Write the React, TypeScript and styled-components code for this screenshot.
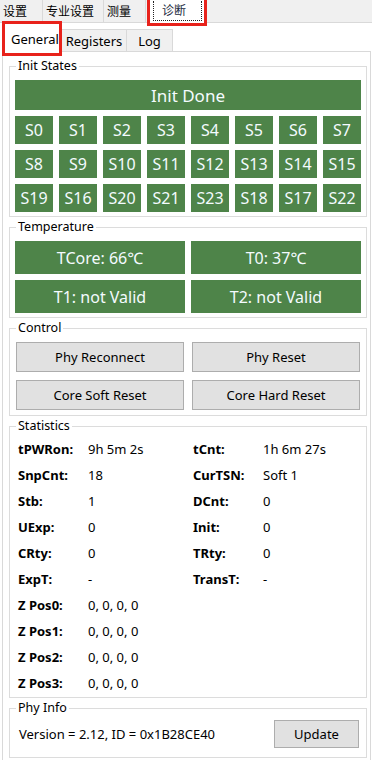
import styled, { createGlobalStyle } from 'styled-components';

const GlobalStyle = createGlobalStyle`
  body {
    margin: 0;
    background: #ffffff;
    font-family: "Noto Sans", "Noto Sans CJK SC", sans-serif;
    color: #000;
  }
`;

const topTabs = [
  { label: '设置', width: 43 },
  { label: '专业设置', width: 61 },
  { label: '测量', width: 42 },
];

const subTabs = [
  { label: 'Registers', width: 65 },
  { label: 'Log', width: 46 },
];

const states = [
  'S0', 'S1', 'S2', 'S3', 'S4', 'S5', 'S6', 'S7',
  'S8', 'S9', 'S10', 'S11', 'S12', 'S13', 'S14', 'S15',
  'S19', 'S16', 'S20', 'S21', 'S23', 'S18', 'S17', 'S22',
];

const temps = ['TCore: 66℃', 'T0: 37℃', 'T1: not Valid', 'T2: not Valid'];

const controls = ['Phy Reconnect', 'Phy Reset', 'Core Soft Reset', 'Core Hard Reset'];

const stats = [
  ['tPWRon:', '9h 5m 2s', 'tCnt:', '1h 6m 27s'],
  ['SnpCnt:', '18', 'CurTSN:', 'Soft 1'],
  ['Stb:', '1', 'DCnt:', '0'],
  ['UExp:', '0', 'Init:', '0'],
  ['CRty:', '0', 'TRty:', '0'],
  ['ExpT:', '-', 'TransT:', '-'],
  ['Z Pos0:', '0, 0, 0, 0'],
  ['Z Pos1:', '0, 0, 0, 0'],
  ['Z Pos2:', '0, 0, 0, 0'],
  ['Z Pos3:', '0, 0, 0, 0'],
];

function App() {
  return (
    <Wrapper>
      <GlobalStyle />
      <TopBar>
        {topTabs.map((t) => (
          <TopTab key={t.label} $width={t.width}>
            {t.label}
          </TopTab>
        ))}
        <ActiveTopTab>
          <FocusText>诊断</FocusText>
        </ActiveTopTab>
      </TopBar>
      <SubTabRow>
        <ActiveSubTab>General</ActiveSubTab>
        {subTabs.map((t) => (
          <SubTab key={t.label} $width={t.width}>
            {t.label}
          </SubTab>
        ))}
      </SubTabRow>
      <Panel>
        <Group>
          <Legend>Init States</Legend>
          <InitDone>Init Done</InitDone>
          <StateGrid>
            {states.map((s) => (
              <StateCell key={s}>{s}</StateCell>
            ))}
          </StateGrid>
        </Group>
        <Group>
          <Legend>Temperature</Legend>
          <TempGrid>
            {temps.map((t) => (
              <TempCell key={t}>{t}</TempCell>
            ))}
          </TempGrid>
        </Group>
        <Group $pt={6} $pb={5}>
          <Legend>Control</Legend>
          <ControlGrid>
            {controls.map((c) => (
              <Button key={c}>{c}</Button>
            ))}
          </ControlGrid>
        </Group>
        <Group $pt={2} $pb={1}>
          <Legend>Statistics</Legend>
          <StatGrid>
            {stats.map((row) => (
              <StatRow key={row[0]}>
                <StatLabel>{row[0]}</StatLabel>
                <StatValue>{row[1]}</StatValue>
                {row[2] && <StatLabel>{row[2]}</StatLabel>}
                {row[3] && <StatValue>{row[3]}</StatValue>}
              </StatRow>
            ))}
          </StatGrid>
        </Group>
        <Group $pt={4} $pb={9}>
          <Legend>Phy Info</Legend>
          <InfoRow>
            <InfoText>Version = 2.12, ID = 0x1B28CE40</InfoText>
            <UpdateButton>Update</UpdateButton>
          </InfoRow>
        </Group>
      </Panel>
    </Wrapper>
  );
}

export default App;

const Wrapper = styled.div`
  width: 372px;
  height: 760px;
  overflow: hidden;
  background: #ffffff;
`;

const TopBar = styled.div`
  display: flex;
  align-items: flex-start;
  height: 22px;
  background: #f0f0f0;
  border-bottom: 1px solid #d9d9d9;
  font-family: "Noto Sans CJK SC", sans-serif;
  font-size: 12px;
`;

const TopTab = styled.div<{ $width: number }>`
  width: ${(p) => p.$width}px;
  height: 22px;
  box-sizing: border-box;
  padding-left: 3px;
  line-height: 22px;
  border-right: 1px solid #d9d9d9;
`;

const ActiveTopTab = styled.div`
  position: relative;
  z-index: 2;
  margin-left: 1px;
  width: 60px;
  height: 26px;
  box-sizing: border-box;
  border: 3px solid #e8221b;
  border-top: none;
  background: #ffffff;
  padding: 1px 2px 0 3px;
`;

const FocusText = styled.div`
  height: 19px;
  border: 1px dotted #222;
  border-top: none;
  line-height: 18px;
  padding-left: 8px;
  color: #1c2a40;
`;

const SubTabRow = styled.div`
  display: flex;
  align-items: flex-end;
  height: 28px;
  padding-left: 2px;
  font-size: 13px;
`;

const ActiveSubTab = styled.div`
  position: relative;
  z-index: 2;
  width: 60px;
  height: 35px;
  margin-bottom: -5px;
  box-sizing: border-box;
  border: 3px solid #e8221b;
  background: #ffffff;
  padding-left: 6px;
  line-height: 30px;
`;

const SubTab = styled.div<{ $width: number }>`
  width: ${(p) => p.$width}px;
  height: 22px;
  box-sizing: border-box;
  border: 1px solid #d9d9d9;
  border-bottom: none;
  border-left: none;
  background: #f0f0f0;
  text-align: center;
  line-height: 22px;
`;

const Panel = styled.div`
  margin: 0 1px 0 2px;
  height: 720px;
  border: 1px solid #d9d9d9;
  border-bottom: none;
  padding: 6px 3px 0 6px;
  display: flex;
  flex-direction: column;
  gap: 2px;
`;

const Group = styled.fieldset<{ $pt?: number; $pb?: number }>`
  margin: 0;
  min-width: 0;
  border: 1px solid #dcdcdc;
  padding: ${(p) => p.$pt ?? 6}px 5px ${(p) => p.$pb ?? 4}px 5px;
`;

const Legend = styled.legend`
  margin-left: 1px;
  padding: 0 2px;
  font-size: 12.5px;
  line-height: 16px;
`;

const greenBox = `
  background: #4e8449;
  color: #f4fbff;
  display: flex;
  align-items: center;
  justify-content: center;
`;

const InitDone = styled.div`
  ${greenBox}
  height: 30px;
  font-size: 17px;
`;

const StateGrid = styled.div`
  display: grid;
  grid-template-columns: repeat(8, 1fr);
  grid-auto-rows: 28px;
  gap: 6px;
  margin-top: 6px;
`;

const StateCell = styled.div`
  ${greenBox}
  font-size: 16px;
`;

const TempGrid = styled.div`
  display: grid;
  grid-template-columns: 1fr 1fr;
  grid-auto-rows: 33px;
  gap: 6px;
`;

const TempCell = styled.div`
  ${greenBox}
  font-size: 16px;
`;

const ControlGrid = styled.div`
  display: grid;
  grid-template-columns: 1fr 1fr;
  grid-auto-rows: 30px;
  column-gap: 8px;
  row-gap: 8px;
  padding: 0 1px;
`;

const Button = styled.div`
  display: flex;
  align-items: center;
  justify-content: center;
  background: #e1e1e1;
  border: 1px solid #adadad;
  font-size: 13px;
`;

const StatGrid = styled.div`
  display: flex;
  flex-direction: column;
  padding-left: 3px;
`;

const StatRow = styled.div`
  display: grid;
  grid-template-columns: 70px 105px 70px 1fr;
  height: 26px;
  align-items: center;
  font-size: 13px;
`;

const StatLabel = styled.div`
  font-weight: 700;
`;

const StatValue = styled.div``;

const InfoRow = styled.div`
  display: flex;
  align-items: center;
  justify-content: space-between;
  padding: 0 2px 0 4px;
`;

const InfoText = styled.div`
  font-size: 13px;
`;

const UpdateButton = styled.div`
  width: 85px;
  height: 28px;
  box-sizing: border-box;
  display: flex;
  align-items: center;
  justify-content: center;
  background: #e1e1e1;
  border: 1px solid #adadad;
  font-size: 13px;
`;
